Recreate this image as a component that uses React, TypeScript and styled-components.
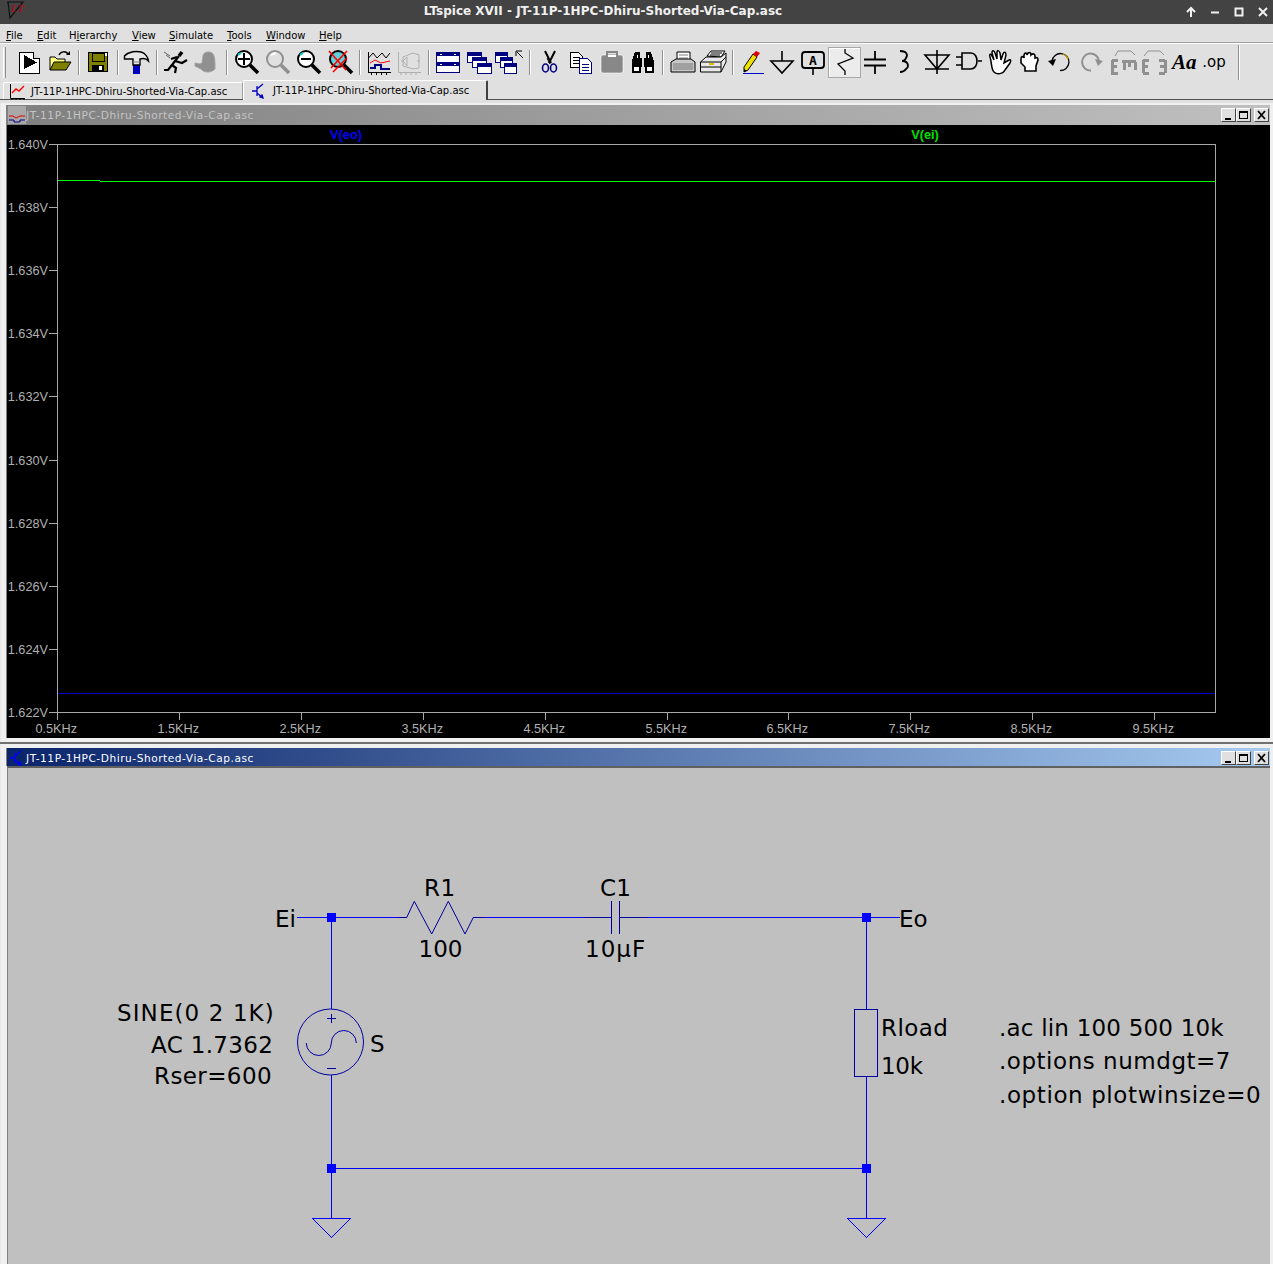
import React from "react";
import styled, { createGlobalStyle } from "styled-components";

const Global = createGlobalStyle`
  html, body { margin: 0; padding: 0; background: #e0e0e0; }
  body { width: 1273px; height: 1264px; overflow: hidden; }
`;

const UI = `"DejaVu Sans", sans-serif`;

const Shell = styled.div`
  width: 1273px; height: 1264px; display: flex; flex-direction: column;
  background: #e0e0e0; overflow: hidden; font-family: ${UI};
`;
const TitleBar = styled.header`
  height: 24px; flex: none; background: #434343; color: #f0f0f0; display: flex; align-items: center;
  padding-bottom: 3px; box-sizing: border-box;
`;
const AppLogo = styled.svg`width: 20px; height: 20px; margin-left: 5px; flex: none;`;
const TitleText = styled.div`
  flex: 1; text-align: center; font-size: 12px; font-weight: 700; padding-right: 3px; padding-top: 1px;
`;
const WinCtl = styled.div`display: flex; gap: 10px; margin-right: 3px; padding-top: 3px;`;
const CtlIcon = styled.svg`width: 14px; height: 14px; display: block;`;

const MenuBar = styled.nav`
  height: 19px; flex: none; box-sizing: border-box; display: flex; padding-left: 6px; align-items: center;
  font-size: 10px; color: #000; border-bottom: 1px solid #a0a0a0; padding-top: 5px;
`;
const MenuItem = styled.span<{ $w: number }>`width: ${(p) => p.$w}px; flex: none; white-space: nowrap;`;
const Key = styled.span`text-decoration: underline;`;

const Toolbar = styled.div`
  height: 37px; flex: none; box-sizing: border-box; border-top: 1px solid #fff; display: flex; align-items: center; padding-left: 3px;
`;
const Grip = styled.div`
  width: 1px; height: 31px; margin-right: 7px; border-left: 1px solid #fff; border-right: 1px solid #909090; flex: none;
`;
const Sep = styled.div<{ $tall?: boolean; $ml?: number }>`
  width: 1px; height: ${(p) => (p.$tall ? 35 : 25)}px; flex: none; background: #909090; border-right: 1px solid #fff;
  margin: 0 3px 0 ${(p) => p.$ml ?? 4}px;
`;
const Tool = styled.div<{ $w?: number; $on?: boolean }>`
  width: ${(p) => p.$w ?? 31}px; height: 28px; flex: none; display: flex; align-items: center; justify-content: center; box-sizing: border-box;
  ${(p) => p.$on && `outline: 1px solid #a8a8a8; background: #ececec; box-shadow: inset 1px 1px 0 #fff; height: 29px;`}
`;
const Ico = styled.svg`width: 28px; height: 28px; display: block; flex: none; overflow: visible;`;

const TabStrip = styled.div`
  height: 20px; flex: none; box-sizing: border-box; display: flex; align-items: flex-end; padding-left: 3px;
  border-bottom: 1px solid #505050;
  box-shadow: 0 1px 0 #a0a0a0;
`;
const Tab = styled.div<{ $active?: boolean }>`
  box-sizing: border-box; display: flex; align-items: center; flex: none; font-size: 10px; color: #000; background: #e0e0e0;
  ${(p) =>
    p.$active
      ? `width: 245px; height: 20px; padding: 0 0 0 6px; gap: 5px; border-left: 1px solid #fff; border-top: 1px solid #fff; border-right: 2px solid #404040; margin-bottom: -1px; border-radius: 2px 2px 0 0; position: relative;`
      : `width: 240px; height: 17px; padding: 0 0 0 4px; gap: 5px; border-left: 1px solid #fff; border-top: 1px solid #fff; border-right: 1px solid #a0a0a0; border-radius: 2px 0 0 0;`}
`;
const TabIcon = styled.svg`width: 18px; height: 18px; flex: none; display: block;`;

const Mdi = styled.main`
  flex: 1; min-height: 0; display: flex; flex-direction: column; background: #e0e0e0; padding-top: 3px;
`;
const Win = styled.section<{ $h: number; $pt: number; $pb?: number }>`
  height: ${(p) => p.$h}px; flex: none; box-sizing: border-box; display: flex; flex-direction: column;
  background: #f0f0f0; padding: ${(p) => p.$pt}px 3px ${(p) => p.$pb ?? 0}px 6px; border-left: 1px solid #e8e8e8;
`;
const Divider = styled.div`height: 2px; flex: none; background: #707070;`;
const Caption = styled.div<{ $active?: boolean }>`
  height: ${(p) => (p.$active ? 18 : 20)}px; flex: none; box-sizing: border-box; display: flex; align-items: center; padding-left: 1px; font-size: 10.6px; letter-spacing: 0.54px;
  padding-top: ${(p) => (p.$active ? 2 : 0)}px;
  box-shadow: -1px 0 0 #808080;
  color: ${(p) => (p.$active ? "#fff" : "#c4c4c4")};
  background: ${(p) => (p.$active ? "linear-gradient(90deg,#0a246a,#a6caf0)" : "linear-gradient(90deg,#808080,#c0c0c0)")};
`;
const CaptionText = styled.span`flex: 1; white-space: nowrap;`;
const CapBtns = styled.div`display: flex; align-items: center; margin-right: 1px;`;
const CapBtn = styled.div<{ $ml?: number }>`
  width: 15px; height: 14px; box-sizing: border-box; background: #e0e0e0; margin-left: ${(p) => p.$ml ?? 0}px;
  border-top: 1px solid #fff; border-left: 1px solid #fff; border-right: 1px solid #404040; border-bottom: 1px solid #404040;
  display: flex; align-items: center; justify-content: center;
`;
const CapGlyph = styled.svg`width: 11px; height: 10px; display: block;`;
const Plot = styled.div`flex: 1; min-height: 0; background: #000; box-shadow: -1px 0 0 #808080;`;
const PlotSvg = styled.svg`display: block; width: 1263px; height: 613px;`;
const Sheet = styled.div`flex: 1; min-height: 0; background: #c0c0c0; border-top: 2px solid #606060; border-left: 1px solid #808080;`;
const SheetSvg = styled.svg`display: block; width: 1262px; height: 496px;`;

const AxisLabel = styled.text`
  font-family: "Liberation Sans", Arial, sans-serif; font-size: 12.7px; fill: #b0b0b0;
`;
const TraceLabel = styled.text`
  font-family: "Liberation Sans", Arial, sans-serif; font-size: 12.8px; font-weight: 700;
`;
const SchText = styled.text`
  font-family: "DejaVu Sans", sans-serif; font-size: 23px; fill: #000;
`;
const Ground = styled.polygon`fill: none; stroke: #0000ff; stroke-width: 1;`;

const icons: Record<string, React.ReactNode> = {
  new: (<g shapeRendering="crispEdges"><path d="M4.5 4.5H18.5L24.5 10.5V25.5H4.5Z" fill="#fff" stroke="#000" /><path d="M18.5 4.5V10.5H24.5" fill="#d8d8d8" stroke="#000" /><path d="M9 7L22 14.5L9 21Z" fill="#000" /></g>),
  open: (<g><path d="M5 22V9H10L12 11H20V14" fill="#ffff80" stroke="#000" /><path d="M5 22L9 14H26L21 22Z" fill="#808000" stroke="#000" /><path d="M14 7C16 3 21 3 23 6" fill="none" stroke="#000" strokeWidth="1.5" /><path d="M21 7H25V3Z" fill="#000" /></g>),
  save: (<g shapeRendering="crispEdges"><rect x="4.5" y="4.5" width="19" height="19" fill="#808000" stroke="#000" /><rect x="8" y="5" width="12" height="8" fill="#808000" stroke="#000" /><rect x="21" y="5" width="2" height="3" fill="#fff" /><rect x="8" y="17" width="12" height="6" fill="#000" /><rect x="15" y="18" width="3" height="4" fill="#fff" /></g>),
  hammer: (<g><rect x="10" y="17" width="7" height="9" fill="#0000c0" /><path d="M1.5 8C6 3 14 3 18 4C22 5 25 9 25.5 13C23 10 20 10 17 11V17H10V11H5L1.5 11Z" fill="#e8e8e8" stroke="#000" strokeWidth="1.4" /><path d="M10 14H17" stroke="#808080" /></g>),
  run: (<g fill="none" stroke="#000" strokeWidth="2.2"><path d="M17 8L13 13L10 17L14 20L13 25" /><path d="M10 17L6 22H2" /><path d="M13 13L20 15L25 12" /><path d="M15 9L9 11" /><path d="M20 4L17 8" strokeWidth="3.5" /><path d="M2 4L8 8M4 7L8 10" strokeWidth="1" stroke="#606060" /></g>),
  halt: (<path d="M10 8C10 4 16 3 19 5C22 7 22 14 22 21C18 25 11 25 8 21L2 18V15L7 16L9 15Z" fill="#909090" stroke="#a0a0a0" />),
  zoomin: (<g><circle cx="11" cy="11" r="8" fill="#fff" stroke="#000" strokeWidth="2" /><path d="M5 11H17M11 5V17" stroke="#000" strokeWidth="2" /><path d="M5 7A8 8 0 0 1 8 5" stroke="#00c8d0" strokeWidth="2" fill="none" /><path d="M17 17L25 25" stroke="#000" strokeWidth="3.5" /></g>),
  zoom: (<g><circle cx="11" cy="11" r="8" fill="#e0e0e0" stroke="#909090" strokeWidth="2" /><path d="M7 7L12 5" stroke="#fff" strokeWidth="2" /><path d="M17 17L25 25" stroke="#909090" strokeWidth="3.5" /></g>),
  zoomout: (<g><circle cx="11" cy="11" r="8" fill="#fff" stroke="#000" strokeWidth="2" /><path d="M6 11H16" stroke="#000" strokeWidth="2" /><path d="M5 7A8 8 0 0 1 8 5" stroke="#00c8d0" strokeWidth="2" fill="none" /><path d="M17 17L25 25" stroke="#000" strokeWidth="3.5" /></g>),
  zoomx: (<g><circle cx="12" cy="11" r="8" fill="#60d0d8" stroke="#000" strokeWidth="2" /><path d="M18 17L26 25" stroke="#000" strokeWidth="3.5" /><path d="M3 3L20 22M21 3L5 20M7 24L21 10" stroke="#ff0000" strokeWidth="1.6" /></g>),
  plot: (<g fill="none" shapeRendering="crispEdges"><path d="M3.5 4V24.5H26" stroke="#000" /><path d="M3.5 10L8 5L12 10L17 5L21 10L25 5" stroke="#000" shapeRendering="auto" /><path d="M5 15L10 12L16 15L25 13" stroke="#ff0000" shapeRendering="auto" /><path d="M5 20H10V17H16V21H25" stroke="#000080" strokeWidth="1.4" /><path d="M6 24V27M11 24V27M16 24V27M21 24V27" stroke="#000" /></g>),
  plot2: (<g fill="none" stroke="#b0b0b0"><path d="M3.5 4V24.5H26" /><path d="M8 9L18 5L24 7V20L18 21L8 18Z" /><path d="M6 13H9M22 13H25M8 13L12 9V18Z" /><path d="M6 24V27M11 24V27M16 24V27M21 24V27" /></g>),
  tile: (<g shapeRendering="crispEdges"><rect x="2.5" y="4.5" width="23" height="10" fill="#fff" stroke="#000080" /><rect x="3" y="5" width="22" height="3" fill="#000080" /><rect x="20" y="6" width="2" height="1" fill="#fff" /><rect x="6" y="6" width="2" height="1" fill="#fff" /><rect x="2.5" y="14.5" width="23" height="10" fill="#fff" stroke="#000080" /><rect x="3" y="15" width="22" height="3" fill="#000080" /><rect x="20" y="16" width="2" height="1" fill="#fff" /><rect x="6" y="16" width="2" height="1" fill="#fff" /></g>),
  cascade: (<g shapeRendering="crispEdges">{[[0, 4], [5, 9], [10, 15]].map(([x, y]) => (<g key={x}><rect x={x + 2.5} y={y + 0.5} width="14" height="9.5" fill="#fff" stroke="#000080" /><rect x={x + 3} y={y + 1} width="13" height="3" fill="#000080" /></g>))}</g>),
  cascade2: (<g shapeRendering="crispEdges">{[[-3, 4], [2, 9], [6, 15]].map(([x, y]) => (<g key={x}><rect x={x + 2.5} y={y + 0.5} width="12" height="9.5" fill="#fff" stroke="#000080" /><rect x={x + 3} y={y + 1} width="11" height="3" fill="#000080" /></g>))}<path d="M20 3H26M20 3V8M21 4L27 10" stroke="#000" fill="none" shapeRendering="auto" /></g>),
  cut: (<g fill="none"><path d="M9 3L15 15M19 3L13 15" stroke="#000" strokeWidth="2" /><path d="M11 10L14 16" stroke="#000" /><ellipse cx="9.5" cy="20" rx="3" ry="4" stroke="#000080" strokeWidth="1.6" /><ellipse cx="17.5" cy="20" rx="3" ry="4" stroke="#000080" strokeWidth="1.6" /></g>),
  copy: (<g shapeRendering="crispEdges"><path d="M3.5 4.5H11.5L15.5 8.5V19.5H3.5Z" fill="#fff" stroke="#000" /><path d="M6 9H13M6 12H13M6 15H13" stroke="#000" /><path d="M12.5 10.5H20.5L24.5 14.5V25.5H12.5Z" fill="#fff" stroke="#000080" /><path d="M15 16H22M15 19H22M15 22H22" stroke="#000080" /></g>),
  paste: (<g><rect x="3" y="7" width="22" height="18" rx="2" fill="#888" stroke="#fff" strokeWidth="0.6" /><rect x="9" y="4" width="10" height="3.5" fill="none" stroke="#888" strokeWidth="2" /><rect x="10" y="7" width="8" height="2" fill="#fff" /></g>),
  find: (<g shapeRendering="crispEdges"><path d="M6 4H11V10H13V19H12V25H3V13Z" fill="#000" /><path d="M22 4H17V10H15V19H16V25H25V13Z" fill="#000" /><rect x="5" y="19" width="5" height="4" fill="#fff" /><rect x="18" y="19" width="5" height="4" fill="#fff" /><rect x="8" y="7" width="1" height="3" fill="#fff" /><rect x="19" y="7" width="1" height="3" fill="#fff" /></g>),
  print: (<g><path d="M8 4H21V13H8Z" fill="#fff" stroke="#000" /><path d="M10 7H19M10 10H19" stroke="#808080" /><path d="M2 14L7 11H22L26 14V24H2Z" fill="#c8c8c8" stroke="#000" /><path d="M4 15H24V22H4Z" fill="#a0a0a0" /></g>),
  print2: (<g><path d="M8 8L12 3H26L22 9Z" fill="#fff" stroke="#000" /><path d="M12 5H23M11 7H21" stroke="#000" /><path d="M1.5 14L7 9H22L27 5V14L22 24H1.5Z" fill="#e8e8e8" stroke="#000" /><path d="M1.5 14H22V24M22 14L27 9M1.5 19H22" fill="none" stroke="#000" /><path d="M10 16H15" stroke="#d0c000" strokeWidth="2" /></g>),
  pencil: (<g><path d="M5 19L14 6L18 9L9 22L5 24Z" fill="#f0e000" stroke="#000" /><path d="M14 6L17 3L21 5L18 9Z" fill="#e00000" /><path d="M5 24L5 21L8 23Z" fill="#000" /><path d="M4 25.5H25" stroke="#0000d0" /></g>),
  ground: (<g fill="none" stroke="#000" strokeWidth="1.6"><path d="M14 3V13" /><path d="M3 13H25L14 25Z" /></g>),
  label: (<g><rect x="3" y="4" width="22" height="16" rx="3" fill="#e0e0e0" stroke="#000" strokeWidth="1.8" /><text x="14" y="17" textAnchor="middle" fontFamily="'DejaVu Sans Mono',monospace" fontWeight="700" fontSize="13" fill="#000">A</text><path d="M14 20V27" stroke="#000" strokeWidth="1.6" /></g>),
  res: (<path d="M14 1V5L22 10L7 16L14 23V27" fill="none" stroke="#000" strokeWidth="1.3" />),
  cap: (<g stroke="#000" strokeWidth="1.8" fill="none"><path d="M14 3V11M3 11.5H25M3 17.5H25M14 18V26" /></g>),
  ind: (<g fill="none" stroke="#000" strokeWidth="1.8"><path d="M9 3C16 3 17 7 15 10C14 13 12 13 11 13C18 13 18 19 15 21C13 24 11 24 9 24" /></g>),
  diode: (<g fill="none" stroke="#000" strokeWidth="1.6"><path d="M14 2V26M2 7H26L14 21L2 7ZM2 21H26" /></g>),
  gate: (<g fill="none" stroke="#000" strokeWidth="1.6"><path d="M8 5H17C25 5 25 21 17 21H8Z" fill="#e0e0e0" /><path d="M2 9H8M2 17H8M24 13H28" /></g>),
  hand: (<path d="M6 9C5 6 7 5 8 8L10 12L8 5C8 2 10 2 11 5L13 11L13 4C13 2 15 2 16 5L17 12L19 6C20 3 22 4 22 7L20 15L25 12C27 11 27 13 26 15L21 22C19 26 13 27 10 24C7 21 8 15 6 9Z" fill="#fff" stroke="#000" strokeWidth="1.5" />),
  hand2: (<path d="M6 11C6 8 8 8 9 10L9 7C10 4 12 5 12 7L13 5C15 4 16 5 16 7C18 5 20 6 20 8V10C22 9 23 10 23 12L21 18V23H10V19L6 15Z" fill="#fff" stroke="#000" strokeWidth="1.6" />),
  undo: (<g fill="none"><path d="M6 13A8.5 8.5 0 1 1 14 22.5" stroke="#000" strokeWidth="1.3" /><path d="M17 6A8.5 8.5 0 0 1 22 11" stroke="#c0a000" strokeWidth="1.3" /><path d="M2 13L10 11L7 18Z" fill="#000" /></g>),
  redo: (<g fill="none"><path d="M22 13A8.5 8.5 0 1 0 14 22.5" stroke="#909090" strokeWidth="2" /><path d="M26 13L18 11L21 18Z" fill="#909090" /></g>),
  rot: (<g><path d="M3 12V25H9M3 12H9M3 18H8M13 13H27M15 14V22M20.5 14V19M26 14V22" stroke="#909090" strokeWidth="3" fill="none" shapeRendering="crispEdges" /><path d="M6 8L9 3H22L26 7" stroke="#909090" fill="none" /></g>),
  mir: (<g><path d="M3 12V25M3 12H9M3 18H8M3 25H9M25 12V25M25 12H19M25 18H20M25 25H19" stroke="#909090" strokeWidth="3" fill="none" shapeRendering="crispEdges" /><path d="M4 8L8 3H20L24 7" stroke="#909090" fill="none" /></g>),
  text: (<text x="1" y="21" fontFamily="'Liberation Serif',serif" fontStyle="italic" fontWeight="700" fontSize="21" fill="#000">Aa</text>),
  op: (<text x="12" y="19" textAnchor="middle" fontFamily="'DejaVu Sans',sans-serif" fontSize="15" fill="#000">.op</text>),
};

type TB = { k?: string; w?: number; on?: boolean; sep?: boolean; tall?: boolean; ml?: number };
const tools: TB[] = [
  { k: "new" }, { k: "open", w: 30 }, { sep: true },
  { k: "save", w: 30 }, { sep: true },
  { k: "hammer", w: 30 }, { sep: true },
  { k: "run", w: 30 }, { k: "halt" }, { sep: true },
  { k: "zoomin" }, { k: "zoom" }, { k: "zoomout" }, { k: "zoomx" }, { sep: true },
  { k: "plot", w: 30 }, { k: "plot2", w: 30 }, { sep: true },
  { k: "tile", w: 30 }, { k: "cascade" }, { k: "cascade2" }, { sep: true },
  { k: "cut" }, { k: "copy" }, { k: "paste" }, { k: "find" }, { sep: true },
  { k: "print" }, { k: "print2", w: 30 }, { sep: true },
  { k: "pencil" }, { k: "ground", w: 28 }, { k: "label", w: 33 }, { k: "res", on: true }, { k: "cap", w: 29 }, { k: "ind" }, { k: "diode", w: 33 }, { k: "gate", w: 29 },
  { k: "hand", w: 32 }, { k: "hand2", w: 30 }, { k: "undo" }, { k: "redo" }, { k: "rot", w: 33 }, { k: "mir", w: 30 }, { k: "text" }, { k: "op" },
  { sep: true, tall: true, ml: 7 },
];

const menus: [string, string, string, number][] = [
  ["", "F", "ile", 31], ["", "E", "dit", 32], ["H", "i", "erarchy", 63], ["", "V", "iew", 37], ["", "S", "imulate", 58], ["", "T", "ools", 39], ["", "W", "indow", 53], ["", "H", "elp", 30],
];

const NAME = "JT-11P-1HPC-Dhiru-Shorted-Via-Cap.asc";

const PlotGlyph = () => (
  <g fill="none">
    <path d="M2.5 2V16.5H17" stroke="#000" />
    <path d="M4 11L8 7L11 9L16 4" stroke="#ff0000" strokeWidth="1.4" />
    <path d="M4 16V18M8 16V18M12 16V18M16 16V18" stroke="#000" />
  </g>
);
const TransistorGlyph = ({ c = "#0000c0" }: { c?: string }) => (
  <g fill="none" stroke={c} strokeWidth="1.3">
    <path d="M2 9H7M7 4V14M7 7L13 2M7 11L13 16" />
    <path d="M13 16L10 15L12 13Z" fill={c} />
  </g>
);

const Caps = () => (
  <CapBtns>
    <CapBtn><CapGlyph viewBox="0 0 11 10"><rect x="2" y="8" width="6" height="2" fill="#000" /></CapGlyph></CapBtn>
    <CapBtn><CapGlyph viewBox="0 0 11 10"><rect x="1.5" y="1.5" width="8" height="7" fill="none" stroke="#000" /><rect x="1" y="1" width="9" height="2" fill="#000" /></CapGlyph></CapBtn>
    <CapBtn $ml={3}><CapGlyph viewBox="0 0 11 10"><path d="M2 1L9 9M9 1L2 9" stroke="#000" strokeWidth="1.8" /></CapGlyph></CapBtn>
  </CapBtns>
);

const yLabels = ["1.640V", "1.638V", "1.636V", "1.634V", "1.632V", "1.630V", "1.628V", "1.626V", "1.624V", "1.622V"];
const xLabels = ["0.5KHz", "1.5KHz", "2.5KHz", "3.5KHz", "4.5KHz", "5.5KHz", "6.5KHz", "7.5KHz", "8.5KHz", "9.5KHz"];

const PlotChart = () => (
  <PlotSvg viewBox="7 125 1263 613">
    <rect x="57.5" y="144.5" width="1158" height="568" fill="none" stroke="#a8a8a8" shapeRendering="crispEdges" />
    <path d="M57.5 180.5H99.5" stroke="#00ff00" shapeRendering="crispEdges" />
    <path d="M99.5 181.5H1215" stroke="#00ff00" shapeRendering="crispEdges" />
    <path d="M58 693.5H1215" stroke="#0000d0" shapeRendering="crispEdges" />
    {yLabels.map((t, i) => {
      const y = Math.round(144 + i * 63.11) + 0.5;
      return (
        <g key={t}>
          <path d={`M49 ${y}H57`} stroke="#a8a8a8" shapeRendering="crispEdges" />
          <AxisLabel x="48" y={y + 4.5} textAnchor="end">{t}</AxisLabel>
        </g>
      );
    })}
    {xLabels.map((t, i) => {
      const x = Math.round(57 + i * 121.9) + 0.5;
      return (
        <g key={t}>
          <path d={`M${x} 713V720`} stroke="#a8a8a8" shapeRendering="crispEdges" />
          <AxisLabel x={x - 1.2} y="733" textAnchor="middle">{t}</AxisLabel>
        </g>
      );
    })}
    <TraceLabel x="346" y="139" textAnchor="middle" fill="#0000ff">V(eo)</TraceLabel>
    <TraceLabel x="925" y="139" textAnchor="middle" fill="#00e000">V(ei)</TraceLabel>
  </PlotSvg>
);

const Node = ({ x, y }: { x: number; y: number }) => <rect x={x - 4.5} y={y - 4.5} width="9" height="9" fill="#0000ff" />;
const Gnd = ({ x }: { x: number }) => (
  <g shapeRendering="crispEdges">
    <Ground points={`${x - 19},1218.5 ${x + 19},1218.5 ${x},1237.5`} />
  </g>
);

const Schematic = () => (
  <SheetSvg viewBox="8 768 1262 496">
    <g fill="none" stroke="#0000ff" shapeRendering="crispEdges">
      <path d="M297 917.5H407M473 917.5H612M620 917.5H900" />
      <path d="M331.5 917V1009M331.5 1075V1218M866.5 917V1009M866.5 1076V1218" />
      <path d="M331 1168.5H867" />
    </g>
    <g fill="none" stroke="#0000a0">
      <path d="M398 917.5H406.7L414.3 901.3L431.7 934L448.3 901.3L465 934L473.3 917.5H484" />
      <path d="M583 917.5H611.5M620 917.5H648" shapeRendering="crispEdges" />
      <path d="M611.5 901V934M619.5 901V934" shapeRendering="crispEdges" />
      <circle cx="330.5" cy="1042" r="33" />
      <path d="M327 1018.5H336M331.5 1014V1023M327 1068.5H336" shapeRendering="crispEdges" />
      <path d="M306.3 1043A12.5 12.5 0 0 0 331.3 1043A12.5 12.5 0 0 1 356.3 1043" />
      <rect x="854.5" y="1009.5" width="23" height="67" shapeRendering="crispEdges" />
    </g>
    <Node x={331.5} y={917.5} />
    <Node x={866.5} y={917.5} />
    <Node x={331.5} y={1168.5} />
    <Node x={866.5} y={1168.5} />
    <Gnd x={331.5} />
    <Gnd x={866.5} />
    <SchText x="275" y="927">Ei</SchText>
    <SchText x="899" y="927">Eo</SchText>
    <SchText x="424" y="896" letterSpacing="0.5">R1</SchText>
    <SchText x="418.5" y="957">100</SchText>
    <SchText x="600" y="896" letterSpacing="0.3">C1</SchText>
    <SchText x="585" y="957" letterSpacing="1">10µF</SchText>
    <SchText x="117" y="1021" letterSpacing="1.1">SINE(0 2 1K)</SchText>
    <SchText x="151" y="1053" letterSpacing="0.33">AC 1.7362</SchText>
    <SchText x="154" y="1084" letterSpacing="0.4">Rser=600</SchText>
    <SchText x="370" y="1052">S</SchText>
    <SchText x="881" y="1036" letterSpacing="0.4">Rload</SchText>
    <SchText x="881" y="1074" letterSpacing="-0.3">10k</SchText>
    <SchText x="999" y="1036" letterSpacing="0.2">.ac lin 100 500 10k</SchText>
    <SchText x="999" y="1069" letterSpacing="0.53">.options numdgt=7</SchText>
    <SchText x="999" y="1103" letterSpacing="0.6">.option plotwinsize=0</SchText>
  </SheetSvg>
);

export default function App() {
  return (
    <Shell>
      <Global />
      <TitleBar>
        <AppLogo viewBox="0 0 20 20">
          <path d="M2 1H18L5 17L3 1" fill="none" stroke="#101010" strokeWidth="1.2" />
          <text x="6" y="11" fontFamily="'Liberation Serif',serif" fontStyle="italic" fontWeight="700" fontSize="11" fill="#a01020">LT</text>
        </AppLogo>
        <TitleText>LTspice XVII - {NAME}</TitleText>
        <WinCtl>
          <CtlIcon viewBox="0 0 14 14"><path d="M7 12V3M3 7L7 3L11 7" fill="none" stroke="#f0f0f0" strokeWidth="2" /></CtlIcon>
          <CtlIcon viewBox="0 0 14 14"><path d="M3 7.5H11" stroke="#f0f0f0" strokeWidth="2" /></CtlIcon>
          <CtlIcon viewBox="0 0 14 14"><rect x="3.5" y="3.5" width="7" height="7" fill="none" stroke="#f0f0f0" strokeWidth="2" /></CtlIcon>
          <CtlIcon viewBox="0 0 14 14"><path d="M3 3L11 11M11 3L3 11" stroke="#f0f0f0" strokeWidth="2" /></CtlIcon>
        </WinCtl>
      </TitleBar>
      <MenuBar>
        {menus.map(([a, k, b, w]) => (
          <MenuItem key={a + k + b} $w={w}>{a}<Key>{k}</Key>{b}</MenuItem>
        ))}
      </MenuBar>
      <Toolbar>
        <Grip />
        {tools.map((t, i) =>
          t.sep ? (
            <Sep key={i} $tall={t.tall} $ml={t.ml} />
          ) : (
            <Tool key={i} $w={t.w} $on={t.on}>
              <Ico viewBox="0 0 28 28">{icons[t.k as string]}</Ico>
            </Tool>
          ),
        )}
      </Toolbar>
      <TabStrip>
        <Tab>
          <TabIcon viewBox="0 0 18 18"><PlotGlyph /></TabIcon>
          {NAME}
        </Tab>
        <Tab $active>
          <TabIcon viewBox="0 0 18 18"><TransistorGlyph /></TabIcon>
          {NAME}
        </Tab>
      </TabStrip>
      <Mdi>
        <Win $h={639} $pt={2} $pb={4}>
          <Caption>
            <TabIcon viewBox="0 0 18 18">
              <rect width="18" height="18" fill="#a8a8a8" />
              <path d="M1 10H5L8 12L12 10H17" stroke="#e00000" fill="none" />
              <path d="M1 14H6V16H12V14H17" stroke="#000080" fill="none" />
            </TabIcon>
            <CaptionText>{NAME}</CaptionText>
            <Caps />
          </Caption>
          <Plot><PlotChart /></Plot>
        </Win>
        <Divider />
        <Win $h={520} $pt={4}>
          <Caption $active>
            <TabIcon viewBox="0 0 18 18"><TransistorGlyph c="#0000ff" /></TabIcon>
            <CaptionText>{NAME}</CaptionText>
            <Caps />
          </Caption>
          <Sheet><Schematic /></Sheet>
        </Win>
      </Mdi>
    </Shell>
  );
}
